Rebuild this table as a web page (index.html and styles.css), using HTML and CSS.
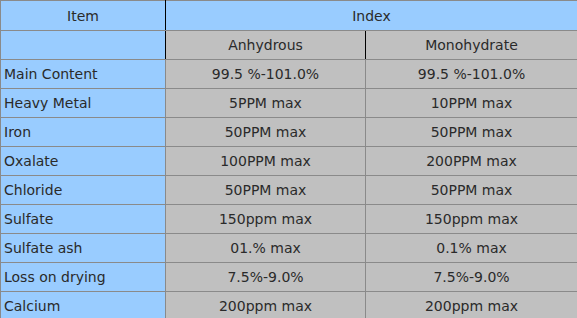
FILE: index.html
```html
<!DOCTYPE html>
<html lang="en">
<head>
  <meta charset="UTF-8" />
  <title>Specification</title>
  <link rel="stylesheet" href="styles.css">
</head>
<body>
  <table class="spec">
    <colgroup>
      <col class="c1">
      <col class="c2">
      <col class="c3">
    </colgroup>
    <tr class="head top">
      <th class="item">Item</th>
      <th class="index" colspan="2">Index</th>
    </tr>
    <tr class="head sub">
      <th class="item"></th>
      <th class="val">Anhydrous</th>
      <th class="val">Monohydrate</th>
    </tr>
    <tr><td class="name">Main Content</td><td class="val">99.5 %-101.0%</td><td class="val">99.5 %-101.0%</td></tr>
    <tr><td class="name">Heavy Metal</td><td class="val">5PPM max</td><td class="val">10PPM max</td></tr>
    <tr><td class="name">Iron</td><td class="val">50PPM max</td><td class="val">50PPM max</td></tr>
    <tr><td class="name">Oxalate</td><td class="val">100PPM max</td><td class="val">200PPM max</td></tr>
    <tr><td class="name">Chloride</td><td class="val">50PPM max</td><td class="val">50PPM max</td></tr>
    <tr><td class="name">Sulfate</td><td class="val">150ppm max</td><td class="val">150ppm max</td></tr>
    <tr><td class="name">Sulfate ash</td><td class="val">01.% max</td><td class="val">0.1% max</td></tr>
    <tr><td class="name">Loss on drying</td><td class="val">7.5%-9.0%</td><td class="val">7.5%-9.0%</td></tr>
    <tr><td class="name">Calcium</td><td class="val">200ppm max</td><td class="val">200ppm max</td></tr>
  </table>
</body>
</html>
```

FILE: styles.css
```css
body {
  margin: 0;
  background: #ffffff;
  font-family: 'DejaVu Sans', Verdana, sans-serif;
  font-size: 14px;
  color: #2a2a2a;
}

.spec {
  width: 577px;
  border-collapse: collapse;
  table-layout: fixed;
  border-top: 1px solid #000;
}

.spec .c1 { width: 165px; }
.spec .c2 { width: 200px; }
.spec .c3 { width: 212px; }

.spec th,
.spec td {
  border: 1px solid #8a8a8a;
  padding: 0 3px;
  height: 28px;
  font-weight: normal;
  white-space: nowrap;
}

.spec .item {
  background: #99ccff;
  text-align: center;
  border-right: 1px solid #000;
}

.spec .index {
  background: #99ccff;
  text-align: center;
}

.spec .head.sub .val {
  border-right: 1px solid #000;
}

.spec .head.sub .val:last-child {
  border-right: 1px solid #8a8a8a;
}

.spec .head.top th {
  height: 29px;
}

.spec .name {
  background: #99ccff;
  text-align: left;
}

.spec .val {
  background: #c0c0c0;
  text-align: center;
}
```
